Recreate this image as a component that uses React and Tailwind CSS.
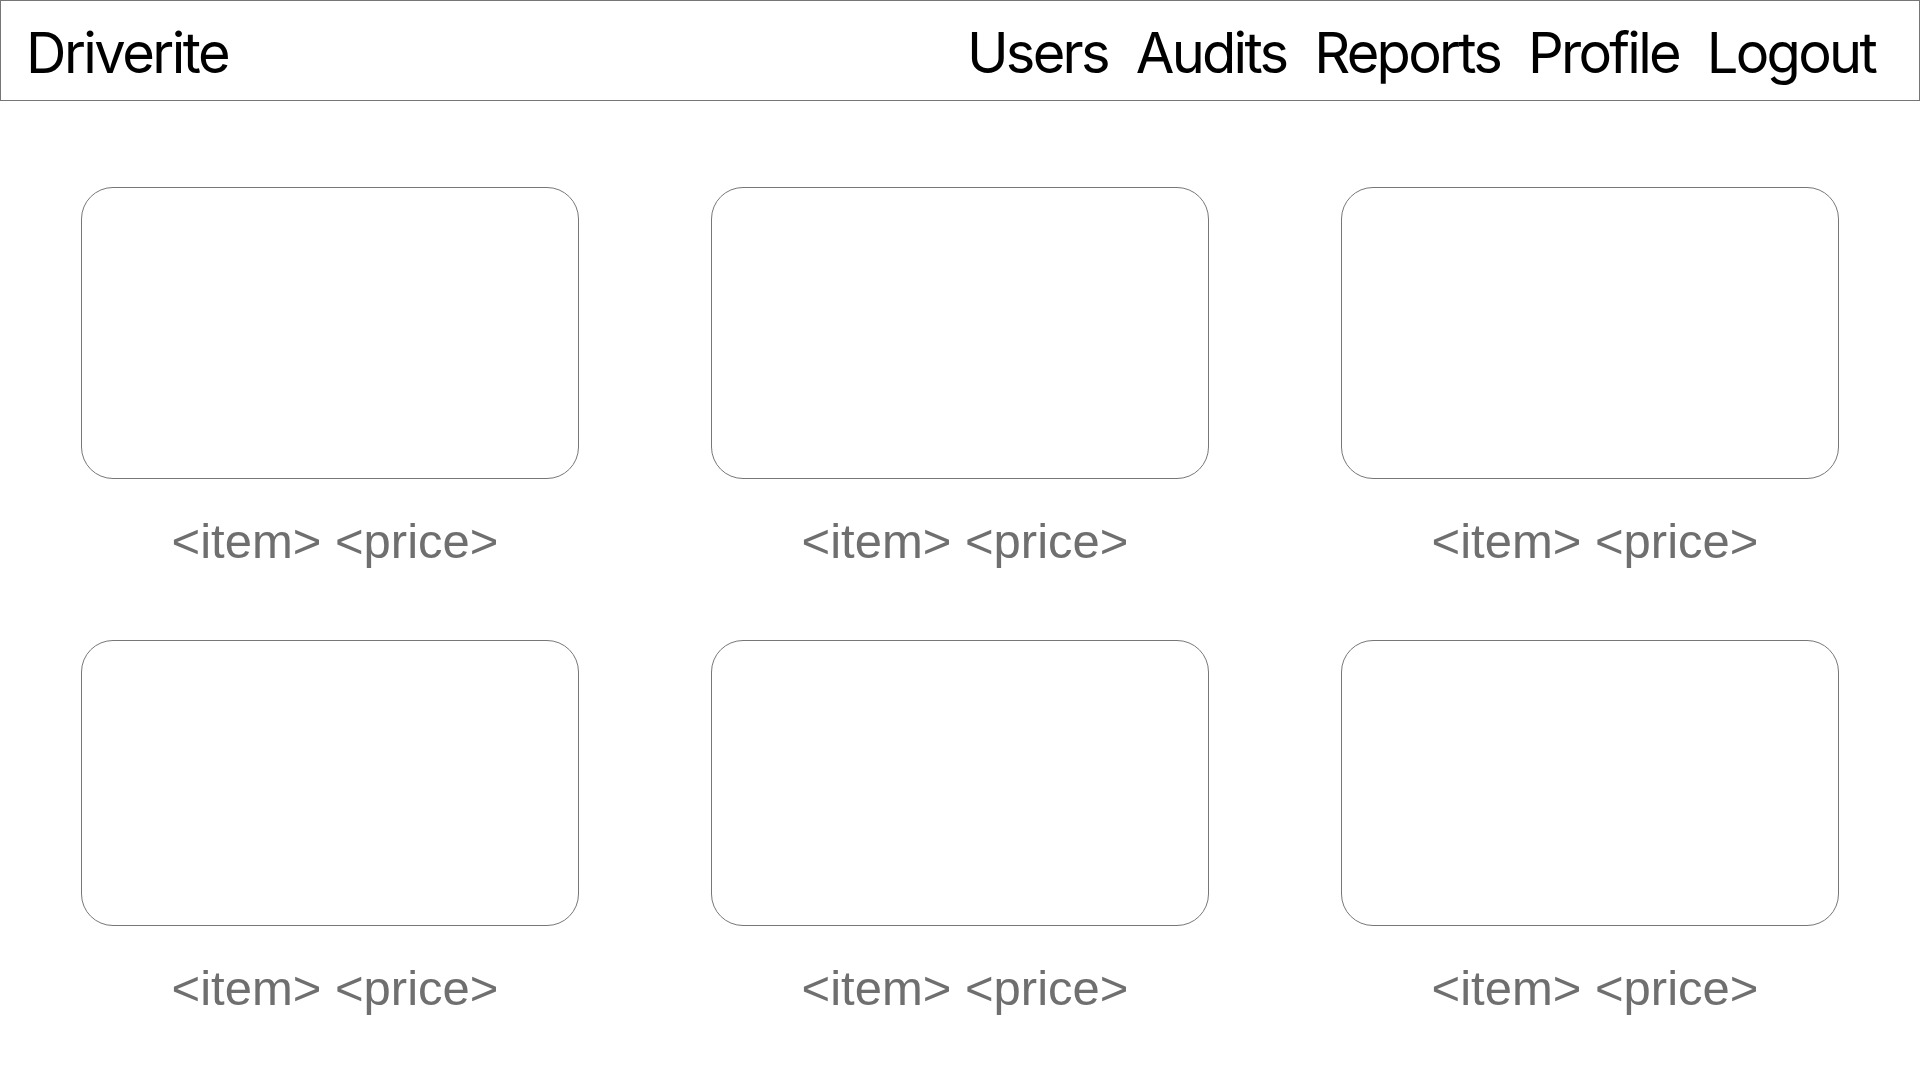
import React from "react";

const items = [
  { h: "h-[292px]" },
  { h: "h-[292px]" },
  { h: "h-[292px]" },
  { h: "h-[286px]" },
  { h: "h-[286px]" },
  { h: "h-[286px]" },
];

export default function App() {
  return (
    <div className="w-[1920px] h-[1080px] bg-white overflow-hidden">
      <header className="h-[101px] border border-[#767676] flex items-center justify-between pl-[25px] pr-[44px] pt-[4px] text-black font-['Inter',sans-serif] text-[56px] tracking-[-0.045em]">
        <div className="leading-none">Driverite</div>
        <nav className="flex gap-[28px] leading-none tracking-[-0.049em]">
          <span>Users</span>
          <span>Audits</span>
          <span>Reports</span>
          <span>Profile</span>
          <span>Logout</span>
        </nav>
      </header>
      <main className="grid grid-cols-[repeat(3,498px)] gap-x-[132px] gap-y-[74px] pl-[81px] pt-[86px]">
        {items.map((it, i) => (
          <div key={i} className="flex flex-col">
            <div className={`${it.h} rounded-[32px] border border-[#777777]`}></div>
            <div className="mt-[38px] pl-[10px] text-center text-[49px] leading-[49px] text-[#6f6f6f] font-['Liberation_Sans',Arial,sans-serif]">
              &lt;item&gt; &lt;price&gt;
            </div>
          </div>
        ))}
      </main>
    </div>
  );
}
